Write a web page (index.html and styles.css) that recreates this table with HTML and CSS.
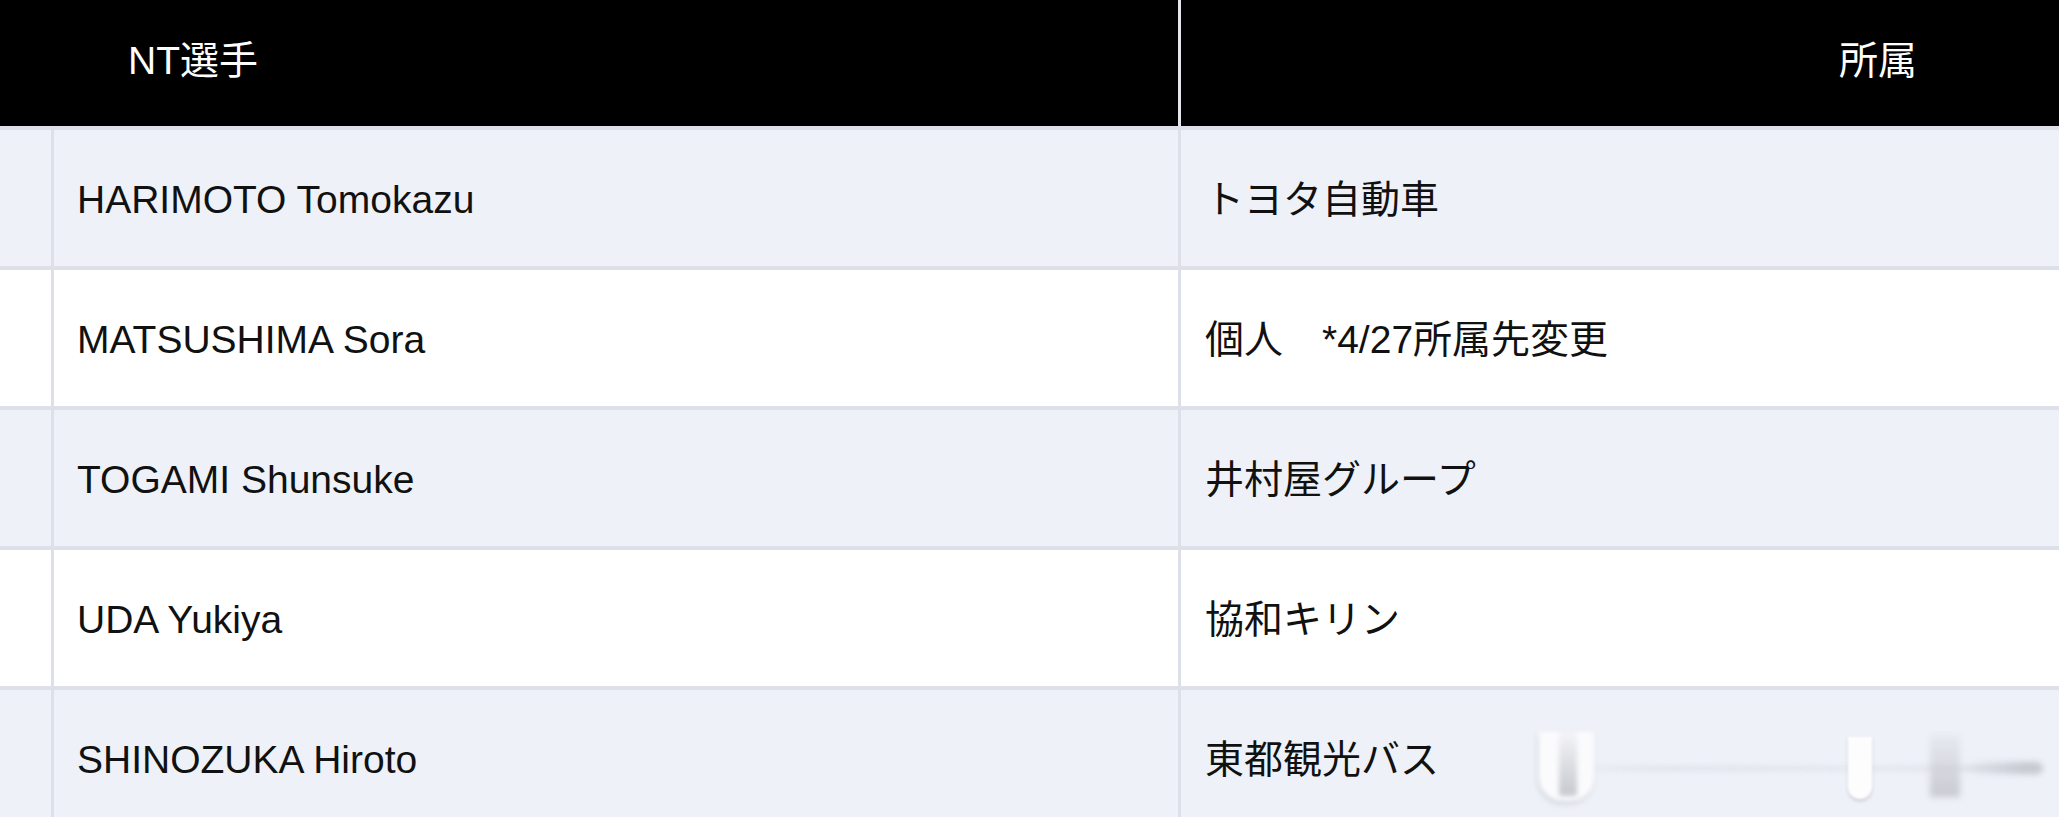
FILE: index.html
```html
<!DOCTYPE html>
<html lang="ja">
<head>
<meta charset="utf-8">
<title>NT選手</title>
<link rel="stylesheet" href="styles.css">
</head>
<body>
<div class="table">
  <div class="head">
    <div class="head-name">NT選手</div>
    <div class="head-team">所属</div>
  </div>
  <div class="row alt">
    <div class="cell-num"></div>
    <div class="cell-name">HARIMOTO Tomokazu</div>
    <div class="cell-team">トヨタ自動車</div>
  </div>
  <div class="row">
    <div class="cell-num"></div>
    <div class="cell-name">MATSUSHIMA Sora</div>
    <div class="cell-team">個人　*4/27所属先変更</div>
  </div>
  <div class="row alt">
    <div class="cell-num"></div>
    <div class="cell-name">TOGAMI Shunsuke</div>
    <div class="cell-team">井村屋グループ</div>
  </div>
  <div class="row">
    <div class="cell-num"></div>
    <div class="cell-name">UDA Yukiya</div>
    <div class="cell-team">協和キリン</div>
  </div>
  <div class="row alt">
    <div class="cell-num"></div>
    <div class="cell-name">SHINOZUKA Hiroto</div>
    <div class="cell-team">東都観光バス</div>
  </div>
</div>
<div class="ghost" aria-hidden="true">
  <div class="ghost-line"></div>
  <div class="ghost-end"></div>
  <div class="ghost-cup"></div>
  <div class="ghost-cup-inner"></div>
  <div class="ghost-pill"></div>
  <div class="ghost-bar"></div>
</div>
</body>
</html>
```
FILE: styles.css
```css
html, body {
  margin: 0;
  padding: 0;
  background: #ffffff;
  overflow: hidden;
}

body {
  font-family: "Liberation Sans", "Noto Sans CJK JP", sans-serif;
  font-size: 39px;
  color: #111111;
  position: relative;
  width: 2059px;
  height: 817px;
}

.table {
  display: flex;
  flex-direction: column;
}

.head {
  display: flex;
  height: 126px;
  background: #000000;
  color: #ffffff;
}

.head-name {
  width: 1181px;
  box-sizing: border-box;
  padding-left: 128px;
  padding-bottom: 13px;
  display: flex;
  align-items: center;
  border-right: 3px solid #e4e6ec;
}

.head-team {
  flex: 1;
  padding-left: 658px;
  padding-bottom: 13px;
  display: flex;
  align-items: center;
}

.row {
  display: flex;
  height: 136px;
  border-top: 4px solid #dde0e8;
  background: #ffffff;
}

.row.alt {
  background: #eef1f8;
}

.cell-num {
  width: 51px;
  border-right: 3px solid #dde0e8;
}

.cell-name {
  width: 1127px;
  box-sizing: border-box;
  padding-left: 23px;
  padding-top: 3px;
  display: flex;
  align-items: center;
  border-right: 3px solid #dde0e8;
}

.cell-team {
  flex: 1;
  padding-left: 24px;
  padding-bottom: 4px;
  display: flex;
  align-items: center;
  white-space: pre;
}

.ghost {
  position: absolute;
  left: 1530px;
  top: 720px;
  width: 520px;
  height: 90px;
  pointer-events: none;
}

.ghost-line {
  position: absolute;
  left: 9px;
  top: 46px;
  width: 503px;
  height: 5px;
  background: linear-gradient(to right, rgba(205,208,216,0.0), rgba(205,208,216,0.4) 25%, rgba(205,208,216,0.3) 70%, rgba(195,198,206,0.5));
  filter: blur(2.5px);
}

.ghost-end {
  position: absolute;
  left: 433px;
  top: 42px;
  width: 79px;
  height: 12px;
  border-radius: 6px;
  background: linear-gradient(to right, rgba(200,203,210,0), #c6c9d0 80%);
  filter: blur(3px);
}

.ghost-cup {
  position: absolute;
  left: 9px;
  top: 12px;
  width: 55px;
  height: 69px;
  border-radius: 0 0 24px 24px;
  background: #fbfbfd;
  box-shadow: -1px 3px 4px rgba(170,172,180,0.45);
  filter: blur(2px);
}

.ghost-cup-inner {
  position: absolute;
  left: 29px;
  top: 12px;
  width: 18px;
  height: 64px;
  border-radius: 3px;
  background: linear-gradient(to bottom, rgba(205,207,213,0.15), #c6c8ce);
  filter: blur(2.5px);
}

.ghost-pill {
  position: absolute;
  left: 318px;
  top: 17px;
  width: 24px;
  height: 62px;
  border-radius: 0 0 12px 12px;
  background: #fdfdfe;
  box-shadow: 0 2px 3px rgba(170,172,180,0.55);
  filter: blur(1.2px);
}

.ghost-bar {
  position: absolute;
  left: 400px;
  top: 15px;
  width: 30px;
  height: 62px;
  background: linear-gradient(to bottom, rgba(205,207,213,0.2), #c8cad0);
  filter: blur(3px);
}
```
